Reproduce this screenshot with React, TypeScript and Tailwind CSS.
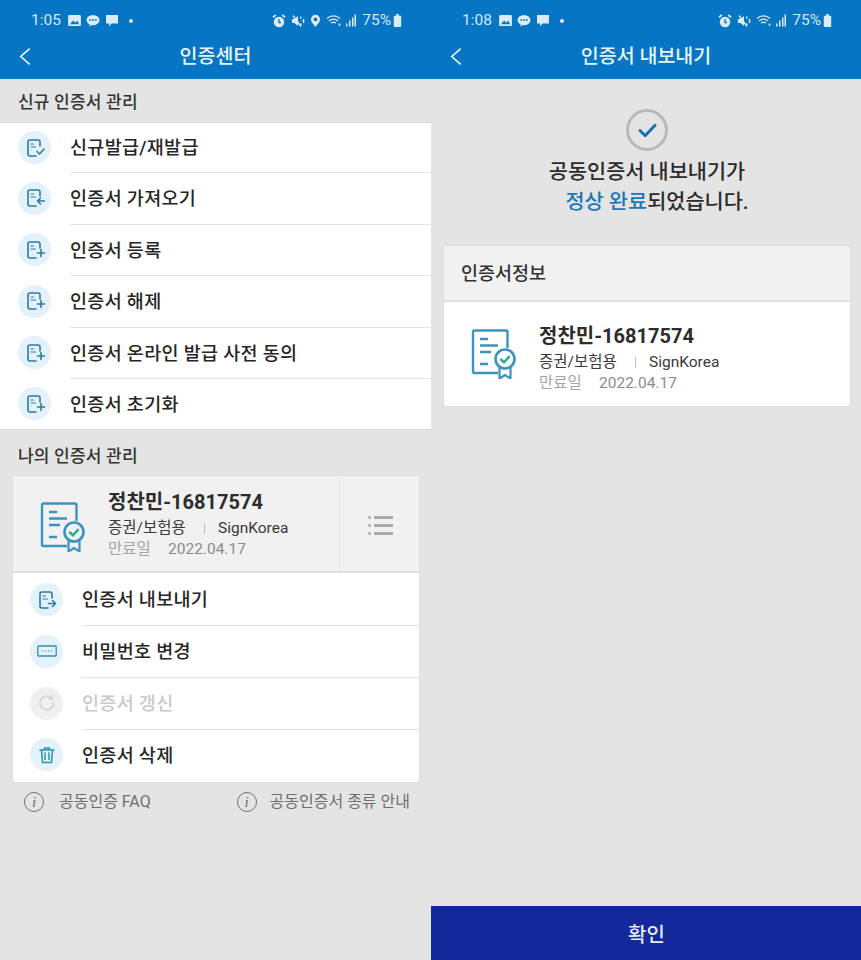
import React from "react";

const DocBase = ({ children }: { children?: React.ReactNode }) => (
  <svg viewBox="0 0 20 20" className="w-[20px] h-[20px]" fill="none" stroke="#2f7aa3" strokeWidth="1.6" strokeLinecap="round" strokeLinejoin="round">
    <path d="M15 8V4a2 2 0 0 0-2-2H5a2 2 0 0 0-2 2v12a2 2 0 0 0 2 2h6" />
    <path d="M6 6h2.500M6 9h4.500" strokeWidth="1.200" />
    {children}
  </svg>
);

const icons: Record<string, React.ReactNode> = {
  check: <DocBase><path d="M12 13.500l2.500 2.500 4.500-5" /></DocBase>,
  left: <DocBase><path d="M19.500 13h-7M15.500 10l-3 3 3 3" /></DocBase>,
  plus: <DocBase><path d="M12.500 13h7M16 9.500v7" /></DocBase>,
  right: <DocBase><path d="M11.500 13.500H18.500M15.500 10.500l3 3-3 3" /></DocBase>,
  pw: (
    <svg viewBox="0 0 20 20" className="w-[20px] h-[20px]" fill="none" stroke="#2f8fb5" strokeWidth="1.300">
      <rect x="0.800" y="5" width="18.400" height="10" rx="1" />
      <path d="M5.500 10h.9M8.500 10h.9M11 10h.9M13.800 10h.9" strokeWidth="1.500" />
    </svg>
  ),
  refresh: (
    <svg viewBox="0 0 20 20" className="w-[20px] h-[20px]" fill="none" stroke="#d5d5d5" strokeWidth="1.800" strokeLinecap="round">
      <path d="M16.500 9.500a6.800 6.800 0 1 1-2.200-4.600" />
      <path d="M15.500 2.500v3.400h-3.400" />
    </svg>
  ),
  trash: (
    <svg viewBox="0 0 20 20" className="w-[20px] h-[20px]" fill="none" stroke="#2f8fb5" strokeWidth="1.500" strokeLinecap="round" strokeLinejoin="round">
      <path d="M3 5h14M7.500 5V3h5v2M4.500 5l1 12.500h9l1-12.500M8 8v6.500M12 8v6.500" />
    </svg>
  ),
};

const Circle = ({ name, muted }: { name: string; muted?: boolean }) => (
  <span className={`w-[33px] h-[33px] rounded-full flex items-center justify-center shrink-0 ${muted ? "bg-[#f0f0f0]" : "bg-[#e3f1fa]"}`}>
    {icons[name]}
  </span>
);

const Row = ({ icon, label, first, muted, h }: { icon: string; label: string; first?: boolean; muted?: boolean; h: string }) => (
  <div className={`flex items-center ${h}`}>
    <Circle name={icon} muted={muted} />
    <div className={`ml-[19px] flex-1 h-full flex items-center pt-[3px] text-[18.5px] font-medium tracking-[0.3px] ${first ? "" : "border-t border-[#e3e3e3]"} ${muted ? "text-[#c9c9c9]" : "text-[#262626]"}`}>
      {label}
    </div>
  </div>
);

const CertIcon = ({ cls }: { cls: string }) => (
  <svg viewBox="0 0 46 50" className={`w-[46px] h-[50px] shrink-0 ${cls}`} fill="none">
    <path d="M27 44H3.500A1.500 1.500 0 0 1 2 42.500V3A1.500 1.500 0 0 1 3.500 1.500h31.500A1.500 1.500 0 0 1 36.500 3V19" stroke="#3d93bd" strokeWidth="2.400" strokeLinejoin="round" />
    <path d="M9 10h8M9 16.500h18M9 23h11M9 35h8" stroke="#3d93bd" strokeWidth="2.400" />
    <path d="M28.500 39v10.500l5.500-3.500 5.500 3.500V39" stroke="#3d93bd" strokeWidth="2.200" />
    <circle cx="34" cy="30" r="9.500" stroke="#3d93bd" strokeWidth="2.600" />
    <path d="M30 30.500l3 2.800 5-5.500" stroke="#2eab8f" strokeWidth="2.500" strokeLinecap="round" />
  </svg>
);

const CertInfo = ({ top, iconCls }: { top: string; iconCls: string }) => (
  <div className={`flex items-start pl-[27px] ${top}`}>
    <CertIcon cls={iconCls} />
    <div className="ml-[22px] flex flex-col">
      <div className="text-[20px] font-bold leading-[28px] text-[#2d2d2d]">정찬민-16817574</div>
      <div className="flex items-center text-[15.5px] leading-[22px] mt-[1px] text-[#3a3a3a]">
        <span className="w-[96px]">증권/보험용</span>
        <span className="w-px h-[11px] bg-[#bdbdbd] mr-[13px]" />
        <span>SignKorea</span>
      </div>
      <div className="flex items-center text-[15.5px] leading-[20px] text-[#8b8b8b]">
        <span className="w-[60px] text-[#a5a5a5]">만료일</span>
        <span>2022.04.17</span>
      </div>
    </div>
  </div>
);

const StatusLeft = ({ time }: { time: string }) => (
  <div className="flex items-center text-[#d5e8f6]">
    <span className="text-[15.5px] w-[37px]">{time}</span>
    <svg viewBox="0 0 14 12" className="w-[13px] h-[11px]"><rect width="14" height="12" rx="1.500" fill="#dcecf7" /><path d="M2 10l3.500-4 2.500 2.500L10 6l2 4z" fill="#0675c4" /></svg>
    <svg viewBox="0 0 15 13" className="w-[14px] h-[13px] ml-[5px]"><ellipse cx="7.500" cy="6" rx="7" ry="5.500" fill="#dcecf7" /><path d="M4 11l-1 2 3-1.500z" fill="#dcecf7" /><path d="M3.500 6h8" stroke="#0675c4" strokeWidth="1.500" strokeDasharray="2 1" /></svg>
    <svg viewBox="0 0 14 13" className="w-[14px] h-[13px] ml-[5px]"><path d="M1 1h12v8.500H6.500L4 12.500V9.500H1z" fill="#dcecf7" /></svg>
    <span className="w-[4px] h-[4px] rounded-full bg-[#dcecf7] ml-[10px]" />
  </div>
);

const StatusRight = ({ loc }: { loc?: boolean }) => (
  <div className="flex items-center text-[#d5e8f6]">
    <svg viewBox="0 0 14 14" className="w-[14px] h-[14px]" fill="none"><circle cx="7" cy="8" r="5.200" fill="#dcecf7" /><path d="M1 3.200l2.800-2.200M13 3.200l-2.800-2.200" stroke="#dcecf7" strokeWidth="1.800" /><path d="M7 5v3.500h2" stroke="#0675c4" strokeWidth="1.300" /></svg>
    <svg viewBox="0 0 14 14" className="w-[14px] h-[14px] ml-[5px]" fill="none"><path d="M1 5h2.500L7 2v10L3.500 9H1z" fill="#dcecf7" /><path d="M9.800 2.500v2M9.800 9.500v2M12.500 5v4" stroke="#dcecf7" strokeWidth="1.500" /><path d="M2 1.500l8 11" stroke="#dcecf7" strokeWidth="1.300" /></svg>
    {loc ? (
      <svg viewBox="0 0 12 14" className="w-[11px] h-[14px] ml-[5px]" fill="none"><path d="M6 13.500C3 9.500 1 7.500 1 5.300a5 5 0 0 1 10 0C11 7.500 9 9.500 6 13.500z" fill="#dcecf7" /><circle cx="6" cy="5.300" r="2" fill="#0675c4" /></svg>
    ) : null}
    <svg viewBox="0 0 16 13" className="w-[16px] h-[13px] ml-[5px]" fill="none" stroke="#dcecf7" strokeWidth="1.200"><path d="M1 4.500a9.500 9.500 0 0 1 13 0M3 7a6.500 6.500 0 0 1 9 0M5.200 9.300a3.300 3.300 0 0 1 4.600 0" /><path d="M7.500 11.500h.1M13.500 9.500v2.500" strokeWidth="1.500" /></svg>
    <svg viewBox="0 0 10 12" className="w-[10px] h-[13px] ml-[4px]" fill="#dcecf7"><rect x="0" y="9" width="1.500" height="3" /><rect x="3" y="6" width="1.500" height="6" /><rect x="6" y="3" width="1.500" height="9" /><rect x="8.500" y="0" width="1.500" height="12" /></svg>
    <span className="text-[15.5px] ml-[6px]">75%</span>
    <svg viewBox="0 0 9 14" className="w-[9px] h-[13px] ml-[2px]" fill="#dcecf7"><rect x="3" y="0" width="3" height="2" /><rect x="0.500" y="2" width="8" height="12" rx="1" /></svg>
  </div>
);

const Header = ({ title, children }: { title: string; children: React.ReactNode }) => (
  <div className="bg-[#0675c4] h-[80px] shrink-0 border-b border-[#cfe3f1]">
    <div className="h-[38px] flex items-center justify-between pl-[31px] pr-[29px] pt-[3px]">{children}</div>
    <div className="h-[41px] relative flex items-center justify-center pb-[4px]">
      <svg viewBox="0 0 14 20" className="absolute left-[18px] top-[9px] w-[13px] h-[19px]" fill="none" stroke="#e8f3fa" strokeWidth="1.800" strokeLinecap="round"><path d="M12 2L3 10l9 8" /></svg>
      <span className="text-[19.5px] font-medium text-[#eaf4fb]">{title}</span>
    </div>
  </div>
);

const Section = ({ label, cls }: { label: string; cls: string }) => (
  <div className={`flex items-center pl-[18px] text-[17px] font-medium text-[#333] tracking-[0.2px] ${cls}`}>{label}</div>
);

const Info = ({ label, gap }: { label: string; gap: string }) => (
  <div className="flex items-center text-[16px] text-[#6e6e6e]">
    <span className={`w-[20px] h-[20px] rounded-full border-[1.5px] border-[#707070] flex items-center justify-center text-[15px] italic font-['Liberation_Serif',serif] ${gap}`}>i</span>
    {label}
  </div>
);

export default function App() {
  return (
    <div className="w-[861px] h-[960px] flex overflow-hidden bg-[#e4e4e4] font-['Roboto','Noto_Sans_CJK_KR',sans-serif]">
      <div className="w-[431px] flex flex-col">
        <Header title="인증센터">
          <StatusLeft time="1:05" />
          <StatusRight loc />
        </Header>
        <Section label="신규 인증서 관리" cls="h-[42px] pt-[3px]" />
        <div className="bg-white pl-[18px] border-y border-[#dcdcdc]">
          <Row h="h-[49px]" icon="check" label="신규발급/재발급" first />
          <Row h="h-[52px]" icon="left" label="인증서 가져오기" />
          <Row h="h-[51px]" icon="plus" label="인증서 등록" />
          <Row h="h-[52px]" icon="plus" label="인증서 해제" />
          <Row h="h-[51px]" icon="plus" label="인증서 온라인 발급 사전 동의" />
          <Row h="h-[51px]" icon="plus" label="인증서 초기화" />
        </div>
        <Section label="나의 인증서 관리" cls="h-[46px] pt-[8px]" />
        <div className="ml-[13px] w-[406px] rounded-[2px] ring-1 ring-[#dedede] overflow-hidden bg-white">
          <div className="h-[97px] bg-[#f1f1f1] border-b-2 border-[#dfdfdf] flex justify-between">
            <CertInfo top="pt-[12px]" iconCls="mt-[14px]" />
            <div className="w-[80px] h-full border-l border-[#e6e6e6] flex flex-col items-center justify-center gap-[5px] pt-[3px] pl-[2px]">
              {[0, 1, 2].map((i) => (
                <div key={i} className="flex items-center gap-[3px]">
                  <span className="w-[3px] h-[3px] rounded-full bg-[#a9a9a9]" />
                  <span className="w-[19px] h-[3px] bg-[#a9a9a9]" />
                </div>
              ))}
            </div>
          </div>
          <div className="pl-[17px]">
            <Row h="h-[52px] pt-[1px]" icon="right" label="인증서 내보내기" first />
            <Row h="h-[52px]" icon="pw" label="비밀번호 변경" />
            <Row h="h-[52px]" icon="refresh" label="인증서 갱신" muted />
            <Row h="h-[53px] pb-[2px]" icon="trash" label="인증서 삭제" />
          </div>
        </div>
        <div className="flex justify-between pl-[24px] pr-[21px] mt-[8px]">
          <Info label="공동인증 FAQ" gap="mr-[15px]" />
          <Info label="공동인증서 종류 안내" gap="mr-[13px]" />
        </div>
      </div>

      <div className="w-[430px] flex flex-col">
        <Header title="인증서 내보내기">
          <StatusLeft time="1:08" />
          <StatusRight />
        </Header>
        <div className="flex-1 flex flex-col">
          <div className="flex flex-col items-center pt-[29px]">
            <span className="w-[42px] h-[42px] ml-[2px] rounded-full border-[3px] border-[#b9b9b9] flex items-center justify-center">
              <svg viewBox="0 0 20 16" className="w-[19px] h-[15px]" fill="none" stroke="#0f6fb4" strokeWidth="3" strokeLinecap="round" strokeLinejoin="round"><path d="M2 8l5.500 5.500L18 2.500" /></svg>
            </span>
            <div className="mt-[6px] text-[20.8px] font-medium leading-[30px] text-[#2b2b2b] text-center">
              <div className="pl-[2px]">공동인증서 내보내기가</div>
              <div className="pl-[22px]"><span className="text-[#1b78b8]">정상 완료</span>되었습니다.</div>
            </div>
          </div>
          <div className="ml-[13px] mr-[11px] mt-[29px] rounded-[2px] ring-1 ring-[#dedede] bg-white overflow-hidden">
            <div className="h-[56px] bg-[#f1f1f1] border-b-2 border-[#dfdfdf] flex items-center pl-[17px] pt-[4px] text-[18.5px] font-medium text-[#333]">인증서정보</div>
            <div className="h-[104px]">
              <CertInfo top="pt-[20px]" iconCls="mt-[7px]" />
            </div>
          </div>
          <div className="flex-1" />
          <div className="h-[54px] bg-[#13289a] flex items-center justify-center pt-[3px] pl-[1px] text-[20px] font-medium text-[#e8ecf8]">확인</div>
        </div>
      </div>
    </div>
  );
}
